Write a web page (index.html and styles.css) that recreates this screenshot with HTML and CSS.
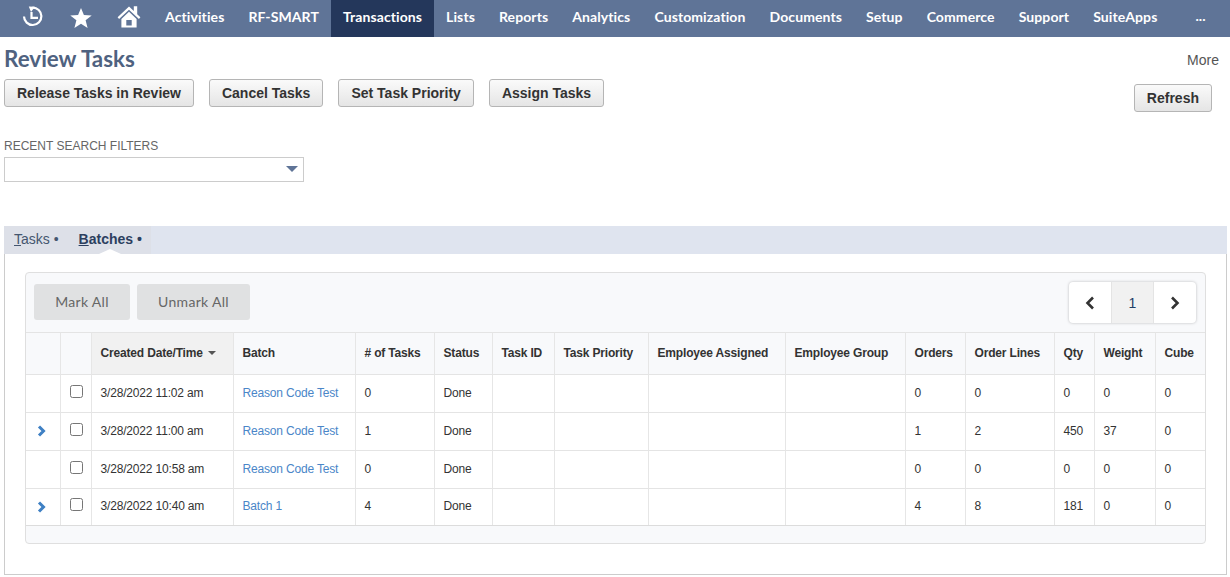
FILE: index.html
```html
<!DOCTYPE html>
<html lang="en">
<head>
    <meta charset="UTF-8">
    <title>Review Tasks</title>
    <link rel="stylesheet" href="styles.css">
</head>
<body>
<nav class="topnav">
    <a class="nav-icon" href="#">
        <svg width="24" height="24" viewBox="0 0 24 24" fill="none" stroke="#fff" stroke-width="2.2">
            <path d="M11.500 2.600A8.700 8.700 0 1 1 3 11.500"/>
            <path d="M10.500 7v5.800h6.500"/>
            <path d="M7.800 1.500L14 1.800 10 7z" fill="#fff" stroke="none"/>
        </svg>
    </a>
    <a class="nav-icon" href="#">
        <svg width="24" height="24" viewBox="0 0 24 24" fill="#fff">
            <path d="M12 3l2.900 6.900 7.800.5-6.100 4.800 2 7.800-6.600-4.200-6.600 4.200 2-7.800-6.100-4.800 7.800-.5z"/>
        </svg>
    </a>
    <a class="nav-icon" href="#">
        <svg width="24" height="24" viewBox="0 0 24 24" fill="#fff">
            <path d="M12 1.500L.6 12.200l1.500 1.700L12 4.700l9.900 9.200 1.500-1.700-3.200-3V1.200h-3.400v4.800z"/>
            <path d="M12 6.800L4.400 14v8.500h15.200V14zM9.300 15h5.400v5.500H9.300z" fill-rule="evenodd"/>
        </svg>
    </a>
    <a href="#">Activities</a>
    <a href="#">RF-SMART</a>
    <a class="active" href="#">Transactions</a>
    <a href="#">Lists</a>
    <a href="#">Reports</a>
    <a href="#">Analytics</a>
    <a href="#">Customization</a>
    <a href="#">Documents</a>
    <a href="#">Setup</a>
    <a href="#">Commerce</a>
    <a href="#">Support</a>
    <a href="#">SuiteApps</a>
    <a class="nav-more" href="#">...</a>
</nav>

<div class="page-head">
    <h1>Review Tasks</h1>
    <a class="more-link" href="#">More</a>
</div>

<div class="actions">
    <div class="action-buttons">
        <button>Release Tasks in Review</button>
        <button>Cancel Tasks</button>
        <button>Set Task Priority</button>
        <button>Assign Tasks</button>
    </div>
    <button class="refresh">Refresh</button>
</div>

<div class="filters">
    <label for="recent">RECENT SEARCH FILTERS</label>
    <div class="select-box" id="recent"><span class="select-arrow"></span></div>
</div>

<div class="tabs">
    <div class="tab-group">
        <span class="tab"><u>T</u>asks •</span>
        <span class="tab tab-selected"><u>B</u>atches •</span>
    </div>
</div>

<section class="panel">
    <div class="card">
        <div class="toolbar">
            <div class="mark-buttons">
                <button class="mark mark-all">Mark All</button>
                <button class="mark unmark-all">Unmark All</button>
            </div>
            <div class="pager">
                <span class="pager-btn">
                    <svg width="10" height="14" viewBox="0 0 10 14" fill="none" stroke="#333" stroke-width="2.600"><path d="M8 1.500L2.500 7 8 12.500"/></svg>
                </span>
                <span class="pager-btn pager-current">1</span>
                <span class="pager-btn">
                    <svg width="10" height="14" viewBox="0 0 10 14" fill="none" stroke="#333" stroke-width="2.600"><path d="M2 1.500L7.500 7 2 12.500"/></svg>
                </span>
            </div>
        </div>
        <table class="grid">
            <thead>
                <tr>
                    <th></th>
                    <th></th>
                    <th class="sorted">Created Date/Time <span class="sort-caret"></span></th>
                    <th>Batch</th>
                    <th># of Tasks</th>
                    <th>Status</th>
                    <th>Task ID</th>
                    <th>Task Priority</th>
                    <th>Employee Assigned</th>
                    <th>Employee Group</th>
                    <th>Orders</th>
                    <th>Order Lines</th>
                    <th>Qty</th>
                    <th>Weight</th>
                    <th>Cube</th>
                </tr>
            </thead>
            <tbody>
                <tr>
                    <td></td>
                    <td class="check"><input type="checkbox"></td>
                    <td>3/28/2022 11:02 am</td>
                    <td><a href="#">Reason Code Test</a></td>
                    <td>0</td>
                    <td>Done</td>
                    <td></td>
                    <td></td>
                    <td></td>
                    <td></td>
                    <td>0</td>
                    <td>0</td>
                    <td>0</td>
                    <td>0</td>
                    <td>0</td>
                </tr>
                <tr>
                    <td class="expand"><svg width="10" height="12" viewBox="0 0 10 12" fill="none" stroke="#3f80c4" stroke-width="3"><path d="M2 1.500L6.500 6 2 10.500"/></svg></td>
                    <td class="check"><input type="checkbox"></td>
                    <td>3/28/2022 11:00 am</td>
                    <td><a href="#">Reason Code Test</a></td>
                    <td>1</td>
                    <td>Done</td>
                    <td></td>
                    <td></td>
                    <td></td>
                    <td></td>
                    <td>1</td>
                    <td>2</td>
                    <td>450</td>
                    <td>37</td>
                    <td>0</td>
                </tr>
                <tr>
                    <td></td>
                    <td class="check"><input type="checkbox"></td>
                    <td>3/28/2022 10:58 am</td>
                    <td><a href="#">Reason Code Test</a></td>
                    <td>0</td>
                    <td>Done</td>
                    <td></td>
                    <td></td>
                    <td></td>
                    <td></td>
                    <td>0</td>
                    <td>0</td>
                    <td>0</td>
                    <td>0</td>
                    <td>0</td>
                </tr>
                <tr>
                    <td class="expand"><svg width="10" height="12" viewBox="0 0 10 12" fill="none" stroke="#3f80c4" stroke-width="3"><path d="M2 1.500L6.500 6 2 10.500"/></svg></td>
                    <td class="check"><input type="checkbox"></td>
                    <td>3/28/2022 10:40 am</td>
                    <td><a href="#">Batch 1</a></td>
                    <td>4</td>
                    <td>Done</td>
                    <td></td>
                    <td></td>
                    <td></td>
                    <td></td>
                    <td>4</td>
                    <td>8</td>
                    <td>181</td>
                    <td>0</td>
                    <td>0</td>
                </tr>
            </tbody>
        </table>
        <div class="card-foot"></div>
    </div>
</section>
</body>
</html>
```

FILE: styles.css
```css
html, body {
    height: 577px;
    overflow: hidden;
}

body {
    font-family: "Liberation Sans", Arial, sans-serif;
    background-color: #fff;
    color: #222;
    margin: 0;
}

a {
    text-decoration: none;
}

/* top navigation */
.topnav {
    display: flex;
    height: 37px;
    padding-left: 9px;
    background-color: #5f7497;
    font-family: Lato, sans-serif;
    font-size: 14px;
    font-weight: 700;
    letter-spacing: 0.1px;
}

.topnav a {
    display: flex;
    align-items: center;
    padding: 0 12px 4px;
    color: #fff;
}

.topnav a.active {
    background-color: #24375b;
}

.topnav a.nav-more {
    margin-left: 14px;
    padding-bottom: 6px;
}

/* page heading */
.page-head {
    display: flex;
    justify-content: space-between;
    align-items: center;
    height: 42px;
    padding: 0 11px 0 4px;
}

.page-head h1 {
    margin: 0;
    font-family: Lato, sans-serif;
    font-size: 22.4px;
    font-weight: 700;
    color: #4f6280;
}

.more-link {
    margin-top: 3px;
    font-size: 14px;
    color: #555;
}

/* action buttons */
.actions {
    display: flex;
    justify-content: space-between;
    align-items: flex-start;
    padding: 0 18px 0 4px;
}

.action-buttons {
    display: flex;
    gap: 15px;
}

.actions button {
    height: 28px;
    padding: 0 12px;
    border: 1px solid #b5b5b5;
    border-radius: 3px;
    background: linear-gradient(#fafafa, #e5e5e5);
    font-family: "Liberation Sans", Arial, sans-serif;
    font-size: 14px;
    font-weight: 700;
    color: #333;
}

.actions .refresh {
    margin-top: 5px;
}

/* filter */
.filters {
    padding: 0 4px;
    margin-top: 27px;
}

.filters label {
    display: block;
    margin-bottom: 4px;
    font-size: 12px;
    line-height: 14px;
    color: #666;
}

.select-box {
    position: relative;
    width: 298px;
    height: 23px;
    border: 1px solid #ccc;
}

.select-arrow {
    position: absolute;
    top: 8px;
    right: 5px;
    border-style: solid;
    border-width: 6px 6.5px 0;
    border-color: #5f7497 transparent transparent;
}

/* tabs */
.tabs {
    height: 28px;
    margin: 44px 3px 0 4px;
    background-color: #dfe4ef;
}

.tab-group {
    display: inline-flex;
    width: 147px;
    height: 28px;
    background-color: #dde0e8;
    box-sizing: border-box;
    padding-left: 10px;
    gap: 20px;
}

.tab {
    font-size: 14px;
    line-height: 26px;
    color: #44566f;
}

.tab-selected {
    position: relative;
    font-weight: 700;
    color: #2c3f5f;
}

.tab-selected::after {
    content: "";
    position: absolute;
    left: 20px;
    bottom: 0;
    border-style: solid;
    border-width: 0 11px 5px;
    border-color: transparent transparent #fff;
}

/* panel and card */
.panel {
    height: 321px;
    margin: 0 3px 0 4px;
    padding: 18px 20px 0;
    border: solid #ccc;
    border-width: 0 1px 1px;
    box-sizing: border-box;
}

.card {
    border: 1px solid #dfdfdf;
    border-radius: 4px;
    background-color: #f8f9fb;
    overflow: hidden;
}

.toolbar {
    display: flex;
    justify-content: space-between;
    align-items: center;
    height: 59px;
    padding: 0 9px 0 8px;
}

.mark-buttons {
    display: flex;
    gap: 7px;
    padding-bottom: 1px;
}

.mark {
    height: 36px;
    padding: 0 0 2px;
    border: none;
    border-radius: 3px;
    background-color: #e0e1e2;
    font-family: Lato, sans-serif;
    font-size: 14px;
    letter-spacing: 0.3px;
    color: #666;
}

.mark-all {
    width: 96px;
}

.unmark-all {
    width: 113px;
}

.pager {
    display: flex;
    height: 41px;
    border-radius: 4px;
    background-color: #fff;
    box-shadow: 0 0 3px rgba(0, 0, 0, 0.25);
    overflow: hidden;
}

.pager-btn {
    display: flex;
    justify-content: center;
    align-items: center;
    width: 42px;
    box-sizing: border-box;
    font-size: 14px;
    color: #1f3f66;
}

.pager-current {
    width: 43px;
    background-color: #f1f1f1;
    border: solid #e4e4e4;
    border-width: 0 1px;
}

/* results table */
.grid {
    width: 1179px;
    table-layout: fixed;
    border-collapse: separate;
    border-spacing: 0;
    font-size: 12px;
    letter-spacing: -0.17px;
}

.grid th,
.grid td {
    padding: 0 0 0 8.5px;
    border-right: 1px solid #e6e6e6;
    border-top: 1px solid #e4e4e4;
    box-sizing: border-box;
    text-align: left;
}

.grid th:last-child,
.grid td:last-child {
    border-right: none;
}

.grid th {
    height: 42px;
    padding-bottom: 2px;
    font-weight: 700;
    color: #333;
}

.grid th.sorted {
    background-color: #f1f1f1;
}

.grid td {
    height: 38px;
    padding-bottom: 2px;
    background-color: #fff;
    color: #333;
}

.grid td a {
    color: #4a86c8;
}

.grid tbody tr:last-child td {
    height: 37px;
}

.grid td.check {
    padding-bottom: 5px;
}

.grid td.check input {
    display: block;
    margin: 0 0 0 .5px;
}

.grid td.expand {
    padding: 0 0 1px 11px;
}

.grid td.expand svg {
    display: block;
}

.sort-caret {
    display: inline-block;
    margin-left: 2px;
    vertical-align: 2px;
    border-style: solid;
    border-width: 4px 4px 0;
    border-color: #555 transparent transparent;
}

.grid th:nth-child(1) { width: 35px; }
.grid th:nth-child(2) { width: 31px; }
.grid th:nth-child(3) { width: 142px; }
.grid th:nth-child(4) { width: 122px; }
.grid th:nth-child(5) { width: 79px; }
.grid th:nth-child(6) { width: 58px; }
.grid th:nth-child(7) { width: 62px; }
.grid th:nth-child(8) { width: 94px; }
.grid th:nth-child(9) { width: 137px; }
.grid th:nth-child(10) { width: 120px; }
.grid th:nth-child(11) { width: 60px; }
.grid th:nth-child(12) { width: 89px; }
.grid th:nth-child(13) { width: 40px; }
.grid th:nth-child(14) { width: 61px; }

.card-foot {
    height: 17px;
    border-top: 1px solid #dcdcdc;
}
```
